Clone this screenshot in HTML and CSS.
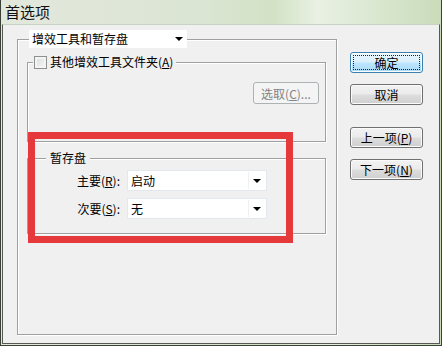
FILE: index.html
```html
<!DOCTYPE html>
<html lang="zh-CN">
<head>
    <meta charset="UTF-8">
    <title>首选项</title>
    <link rel="stylesheet" href="styles.css">
</head>
<body>
    <div class="window">
        <div class="titlebar">首选项</div>

        <div class="client">
            <!-- 主分组框 -->
            <fieldset class="group outer">
                <legend class="combo-legend">
                    <div class="combo">增效工具和暂存盘<i class="arrow"></i></div>
                </legend>

                <fieldset class="group plugins">
                    <legend class="check-legend"><span class="checkbox"></span>其他增效工具文件夹(<u>A</u>)</legend>
                    <div class="browse-row">
                        <button class="btn disabled">选取(<u>C</u>)...</button>
                    </div>
                </fieldset>

                <fieldset class="group scratch">
                    <legend class="text-legend">暂存盘</legend>
                    <div class="disk-rows">
                        <label>主要(<u>R</u>):</label>
                        <div class="field">启动<i class="arrow"></i></div>
                        <label>次要(<u>S</u>):</label>
                        <div class="field">无<i class="arrow"></i></div>
                    </div>
                </fieldset>
            </fieldset>

            <!-- 右侧按钮 -->
            <div class="side">
                <button class="btn default"><span class="focus">确定</span></button>
                <button class="btn">取消</button>
                <button class="btn spaced">上一项(<u>P</u>)</button>
                <button class="btn">下一项(<u>N</u>)</button>
            </div>
        </div>

        <div class="highlight"></div>
    </div>
</body>
</html>
```

FILE: styles.css
```css
* { margin: 0; padding: 0; box-sizing: border-box; }
body {
    font-family: "Noto Sans CJK SC", "Liberation Sans", sans-serif;
    font-size: 12px;
    color: #000;
    background: #f0f0f0;
}
u { text-decoration: underline; text-underline-offset: 1px; }

.window {
    position: relative;
    width: 442px;
    height: 346px;
    display: flex;
    flex-direction: column;
    padding: 0 1px 1px 1px;
    border-left: 1px solid #3a3f38;
    border-right: 1px solid #3a3f38;
    border-bottom: 1px solid #3a3f38;
    background: linear-gradient(to right, #e3e8dd, #dbe5d3 45%, #d2e2c6 62%, #e9f1e3 72%, #cadcba);
}
.titlebar {
    height: 24px;
    line-height: 23px;
    padding-left: 3px;
    font-size: 15px;
    color: #111;
}
.client {
    flex: 1;
    display: flex;
    align-items: flex-start;
    padding: 5px 0 0 14px;
    background: #f0f0f0;
    border: 1px solid #555a52;
    border-top-color: #c9d3c3;
}

/* 分组框 */
.group {
    border: 1px solid #a0a0a0;
    box-shadow: inset 1px 1px 0 #fff, 1px 1px 0 #fff;
    min-inline-size: 0;
}
.outer {
    width: 320px;
    height: 305px;
    padding: 7px 0 0 9px;
}
.combo-legend { margin-left: 2px; padding: 0; }
.combo {
    position: relative;
    width: 158px;
    height: 18px;
    line-height: 18px;
    padding-left: 3px;
    background: #fff;
}
.arrow {
    position: absolute;
    right: 4px;
    top: 50%;
    margin-top: -2px;
    width: 0;
    height: 0;
    border-left: 4px solid transparent;
    border-right: 4px solid transparent;
    border-top: 4px solid #000;
}

.plugins {
    width: 299px;
    height: 87px;
    padding: 13px 6px 0 0;
}
.check-legend, .text-legend {
    line-height: 14px;
    background: #f0f0f0;
}
.check-legend {
    display: flex;
    align-items: center;
    margin-left: 5px;
    padding: 0 3px 0 1px;
}
.checkbox {
    width: 13px;
    height: 13px;
    margin-right: 3px;
    border: 1px solid #8e8f8f;
    background: linear-gradient(135deg, #dcdcdc, #f6f6f6);
    box-shadow: inset 0 0 0 2px #f4f4f4;
}
.browse-row { display: flex; justify-content: flex-end; }

.scratch {
    width: 299px;
    margin-top: 9px;
    padding: 5px 0 14px 0;
}
.text-legend { margin-left: 18px; padding: 0 4px; }
.disk-rows {
    display: grid;
    grid-template-columns: 92px 140px;
    column-gap: 7px;
    row-gap: 7px;
}
.disk-rows label {
    text-align: right;
    line-height: 21px;
}
.field {
    position: relative;
    height: 21px;
    line-height: 19px;
    padding-left: 3px;
    background: #fff;
    border: 1px solid #e2e8ee;
}
.field::after {
    content: "";
    position: absolute;
    right: 17px;
    top: 1px;
    bottom: 1px;
    border-left: 1px solid #eef1f4;
}
.field .arrow { right: 5px; }

/* 按钮 */
.btn {
    font: inherit;
    color: #000;
    height: 21px;
    border: 1px solid #707070;
    border-radius: 3px;
    background: linear-gradient(#f2f2f2, #ebebeb 48%, #dddddd 52%, #cfcfcf);
    box-shadow: inset 0 0 0 1px #fbfbfb;
}
.btn.disabled {
    width: 66px;
    height: 22px;
    color: #838383;
    border-color: #adb2b5;
    background: #f4f4f4;
    box-shadow: none;
}
.side {
    display: flex;
    flex-direction: column;
    gap: 11px;
    margin-left: 13px;
    padding-top: 22px;
}
.side .btn { width: 73px; }
.btn.default {
    border-color: #3c7fb1;
    background: linear-gradient(#eaf6fd, #d9f0fc 48%, #bee6fd 52%, #a7d9f5);
    padding: 2px;
}
.btn.default .focus {
    display: block;
    height: 100%;
    line-height: 13px;
    border: 1px dotted #222;
}
.btn.spaced { margin-top: 11px; }

/* 红色标注框 */
.highlight {
    position: absolute;
    left: 27px;
    top: 132px;
    width: 265px;
    height: 111px;
    border: 7px solid #e5393b;
}
```
